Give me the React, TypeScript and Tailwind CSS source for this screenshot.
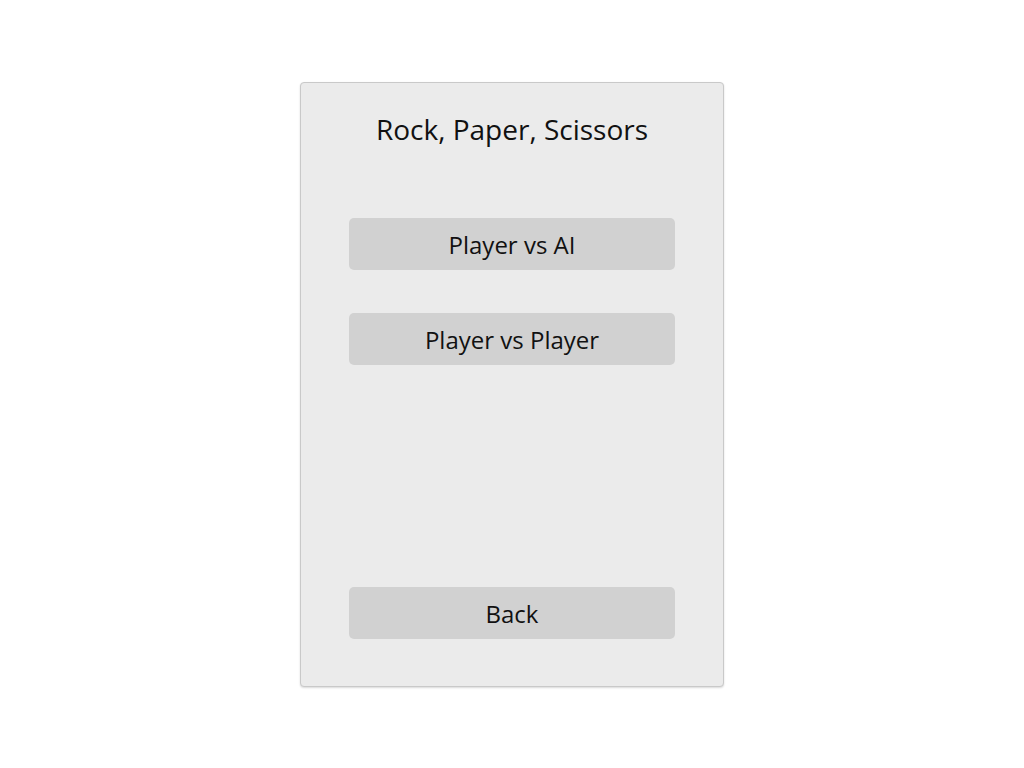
import React from 'react';

function MenuButton({ label }: { label: string }) {
  return (
    <button className="h-[52px] w-full rounded-[5px] bg-[#d1d1d1] pt-[2px] text-[24px] text-[#111] leading-none">
      {label}
    </button>
  );
}

export default function App() {
  return (
    <div className="flex h-[768px] w-full items-center justify-center bg-white font-['Open_Sans',sans-serif]">
      {/* Game menu card */}
      <div className="flex h-[605px] w-[424px] flex-col rounded-[4px] border border-[#c9c9c9] bg-[#ebebeb] px-[48px] pt-[27px] pb-[47px] shadow-[0_1px_2px_rgba(0,0,0,0.15)]">
        <h1 className="h-[38px] text-center text-[28px] leading-[38px] text-[#111]">Rock, Paper, Scissors</h1>

        <div className="mt-[70px] flex flex-col gap-[43px]">
          <MenuButton label="Player vs AI" />
          <MenuButton label="Player vs Player" />
        </div>

        <div className="mt-auto">
          <MenuButton label="Back" />
        </div>
      </div>
    </div>
  );
}
